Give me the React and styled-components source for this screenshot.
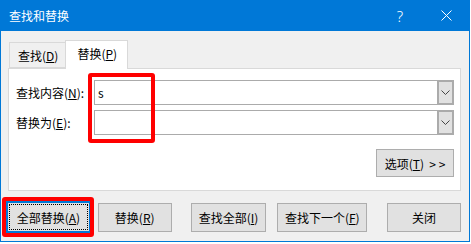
import styled, { createGlobalStyle } from "styled-components";

const GlobalStyle = createGlobalStyle`
  body {
    margin: 0;
    background: #ffffff;
    font-family: "Noto Sans CJK SC", "Noto Sans", sans-serif;
    font-size: 12px;
  }
  *, *::before, *::after {
    box-sizing: border-box;
  }
`;

const Key = ({ children }) => <Underline>{children}</Underline>;

const ChevronDown = () => (
  <svg width="9" height="5" viewBox="0 0 9 5">
    <polyline points="0.5,0.5 4.5,4.5 8.5,0.5" fill="none" stroke="#444" strokeWidth="1" />
  </svg>
);

const CloseGlyph = () => (
  <svg width="11" height="11" viewBox="0 0 11 11">
    <line x1="0.5" y1="0.5" x2="10.5" y2="10.5" stroke="#fff" strokeWidth="1" />
    <line x1="10.5" y1="0.5" x2="0.5" y2="10.5" stroke="#fff" strokeWidth="1" />
  </svg>
);

const ComboBox = ({ value }) => (
  <StyledCombo>
    <StyledComboText>{value}</StyledComboText>
    <StyledComboArrow>
      <ChevronDown />
    </StyledComboArrow>
  </StyledCombo>
);

export default function App() {
  return (
    <>
      <GlobalStyle />
      <StyledWindow>
        <StyledTitleBar>
          <StyledTitle>查找和替换</StyledTitle>
          <StyledCaptionButton>?</StyledCaptionButton>
          <StyledCaptionButton>
            <CloseGlyph />
          </StyledCaptionButton>
        </StyledTitleBar>

        <StyledBody>
          <StyledTabRow>
            <StyledTab>
              查找(<Key>D</Key>)
            </StyledTab>
            <StyledTab active>
              替换(<Key>P</Key>)
            </StyledTab>
          </StyledTabRow>

          <StyledPanel>
            <StyledForm>
              <StyledLabel>
                查找内容(<Key>N</Key>):
              </StyledLabel>
              <StyledFields>
                <ComboBox value="s" />
                <ComboBox value="" />
              </StyledFields>
              <StyledLabel>
                替换为(<Key>E</Key>):
              </StyledLabel>
            </StyledForm>
            <StyledOptionsRow>
              <StyledButton width="78px" height="28px">
                选项(<Key>T</Key>)&nbsp;&nbsp;&gt; &gt;
              </StyledButton>
            </StyledOptionsRow>
          </StyledPanel>

          <StyledButtonRow>
            <StyledDefaultButton>
              全部替换(<Key>A</Key>)
            </StyledDefaultButton>
            <StyledButton width="74px" gap="7px">
              替换(<Key>R</Key>)
            </StyledButton>
            <StyledButton width="76px" gap="19px">
              查找全部(<Key>I</Key>)
            </StyledButton>
            <StyledButton width="90px" gap="11px">
              查找下一个(<Key>F</Key>)
            </StyledButton>
            <StyledButton width="74px" gap="20px">
              关闭
            </StyledButton>
          </StyledButtonRow>
        </StyledBody>
      </StyledWindow>
    </>
  );
}

const StyledWindow = styled.div`
  width: 470px;
  height: 242px;
  border: 1px solid #0078d7;
  border-top: none;
  background: #f0f0f0;
  display: flex;
  flex-direction: column;
`;

const StyledTitleBar = styled.div`
  height: 31px;
  background: #0078d7;
  display: flex;
  align-items: center;
  color: #ffffff;
`;

const StyledTitle = styled.div`
  flex: 1;
  padding-left: 8px;
  font-size: 12px;
  padding-bottom: 1px;
`;

const StyledCaptionButton = styled.div`
  width: 46px;
  height: 31px;
  display: flex;
  align-items: center;
  justify-content: center;
  font-family: "Noto Sans", sans-serif;
  font-size: 15px;
  font-weight: 300;
`;

const StyledBody = styled.div`
  flex: 1;
  display: flex;
  flex-direction: column;
  padding: 9px 8px 0 7px;
`;

const StyledTabRow = styled.div`
  display: flex;
  align-items: flex-end;
  height: 28px;
  padding-left: 1px;
  position: relative;
  z-index: 1;
`;

const StyledTab = styled.div`
  height: ${(p) => (p.active ? "29px" : "26px")};
  margin-bottom: ${(p) => (p.active ? "-1px" : "0")};
  padding: ${(p) => (p.active ? "0 10px 3px 11px" : "0 7px 0 8px")};
  margin-left: ${(p) => (p.active ? "-1px" : "0")};
  background: ${(p) => (p.active ? "#ffffff" : "#f0f0f0")};
  border: 1px solid #d9d9d9;
  border-bottom: ${(p) => (p.active ? "none" : "1px solid #d9d9d9")};
  display: flex;
  align-items: center;
  color: #000;
`;

const Underline = styled.span`
  text-decoration: underline;
  text-underline-offset: 1px;
`;

const StyledPanel = styled.div`
  height: 123px;
  background: #ffffff;
  border: 1px solid #d9d9d9;
  padding: 11px 6px 13px 7px;
  display: flex;
  flex-direction: column;
`;

const StyledForm = styled.div`
  display: grid;
  grid-template-columns: 78px 1fr;
  grid-template-rows: 25px 25px;
  row-gap: 5px;
`;

const StyledLabel = styled.div`
  grid-column: 1;
  display: flex;
  align-items: center;
  color: #000;
`;

const StyledFields = styled.div`
  grid-column: 2;
  grid-row: 1 / span 2;
  display: flex;
  flex-direction: column;
  gap: 5px;
  position: relative;

  &::after {
    content: "";
    position: absolute;
    left: -6px;
    top: -7px;
    width: 67px;
    height: 70px;
    border: 4px solid #ff0000;
    border-radius: 3px;
    pointer-events: none;
  }
`;

const StyledCombo = styled.div`
  height: 25px;
  display: flex;
  border: 1px solid #ababab;
  background: #ffffff;
`;

const StyledComboText = styled.div`
  flex: 1;
  display: flex;
  align-items: center;
  padding-left: 3px;
  color: #000;
`;

const StyledComboArrow = styled.div`
  width: 17px;
  background: #e1e1e1;
  border: 2px solid #ababab;
  margin: -1px -1px -1px 0;
  display: flex;
  align-items: center;
  justify-content: center;
`;

const StyledOptionsRow = styled.div`
  display: flex;
  justify-content: flex-end;
  margin-top: 14px;
`;

const StyledButton = styled.div`
  width: ${(p) => p.width};
  height: ${(p) => p.height || "29px"};
  margin-left: ${(p) => p.gap || "0"};
  margin-top: ${(p) => (p.height ? "0" : "2px")};
  background: #e1e1e1;
  border: 1px solid #adadad;
  display: flex;
  align-items: center;
  justify-content: center;
  color: #000;
  white-space: nowrap;
`;

const StyledButtonRow = styled.div`
  display: flex;
  align-items: flex-start;
  margin-top: 10px;
  margin-left: -2px;
`;

const StyledDefaultButton = styled.div`
  position: relative;
  width: 85px;
  height: 32px;
  background: #e1e1e1;
  border: 2px solid #0078d7;
  display: flex;
  align-items: center;
  justify-content: center;
  color: #000;
  white-space: nowrap;

  &::before {
    content: "";
    position: absolute;
    inset: 1px;
    border: 1px dotted #000;
  }

  &::after {
    content: "";
    position: absolute;
    inset: -6px -5px -6px -6px;
    border: 4px solid #ff0000;
    border-radius: 3px;
  }
`;
